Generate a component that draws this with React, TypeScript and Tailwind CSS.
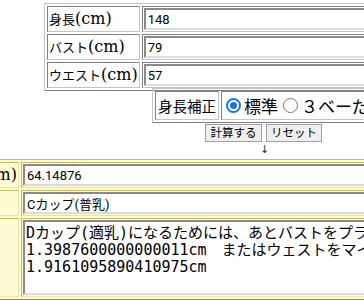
import React from "react";

const tblTop =
  "border-separate border-spacing-[2px] border border-solid border-t-[#c4c4c4] border-l-[#c4c4c4] border-r-[#808080] border-b-[#808080]";
const tdTop =
  "p-[1px] border border-solid border-t-[#808080] border-l-[#808080] border-r-[#c4c4c4] border-b-[#c4c4c4] align-middle";
const inputCls =
  "block h-[22px] px-[2px] border-2 border-solid border-t-[#8a8a8a] border-l-[#8a8a8a] border-r-[#dcdcdc] border-b-[#dcdcdc] bg-white text-[13px] text-black font-['Roboto','Noto_Sans_CJK_JP',sans-serif] outline-none";
const serif = "font-['DejaVu_Serif','Noto_Sans_CJK_JP',serif] text-[16px] leading-[20px] text-black whitespace-nowrap";
const cjk = "font-['Noto_Sans_CJK_JP',sans-serif] text-[13px]";

const tblBot =
  "border-separate border-spacing-[2px] bg-[#fffbd2] border border-solid border-t-[#bdb88a] border-l-[#bdb88a] border-r-[#8f8a60] border-b-[#8f8a60]";
const tdBot =
  "p-[1px] border border-solid border-t-[#c9b85c] border-l-[#c9b85c] border-r-[#ece2a8] border-b-[#ece2a8] align-middle bg-[#fffbd2]";

function Label({ jp }: { jp: string }) {
  return (
    <div className={serif}>
      <span className={cjk}>{jp}</span>(cm)
    </div>
  );
}

export default function App() {
  return (
    <div className="w-[364px] h-[300px] overflow-hidden bg-white">
      <div className="pt-[3px]">
        <table className={"ml-[44px] " + tblTop}>
          <tbody>
            <tr>
              <td className={tdTop + " w-[94px]"}>
                <Label jp="身長" />
              </td>
              <td className={tdTop}>
                <input className={inputCls + " w-[260px]"} defaultValue="148" />
              </td>
            </tr>
            <tr>
              <td className={tdTop}>
                <Label jp="バスト" />
              </td>
              <td className={tdTop}>
                <input className={inputCls + " w-[260px]"} defaultValue="79" />
              </td>
            </tr>
            <tr>
              <td className={tdTop}>
                <Label jp="ウエスト" />
              </td>
              <td className={tdTop}>
                <input className={inputCls + " w-[260px]"} defaultValue="57" />
              </td>
            </tr>
          </tbody>
        </table>

        <table className={"ml-[152px] -mt-[3px] " + tblTop}>
          <tbody>
            <tr>
              <td className={tdTop}>
                <div className="h-[25px] flex items-center px-[1px] font-['Noto_Sans_CJK_JP',sans-serif] text-[14.5px] text-black whitespace-nowrap">
                  身長補正
                </div>
              </td>
              <td className={tdTop}>
                <div className="h-[25px] w-[200px] flex items-center font-['Noto_Sans_CJK_JP',sans-serif] text-[17px] text-black whitespace-nowrap">
                  <span className="ml-[3px] w-[15px] h-[15px] rounded-full border-2 border-[#1a73e8] flex items-center justify-center">
                    <span className="w-[7px] h-[7px] rounded-full bg-[#1a73e8]" />
                  </span>
                  <span className="ml-[3px]">標準</span>
                  <span className="ml-[5px] w-[15px] h-[15px] rounded-full border border-[#767676]" />
                  <span className="ml-[3px]">３ベーだ</span>
                </div>
              </td>
            </tr>
          </tbody>
        </table>

        <div className="ml-[205px] mt-[1px] flex gap-[4px]">
          <button className="h-[18px] w-[57px] flex items-center justify-center border border-solid border-[#a0a0a0] bg-[#efefef] font-['Noto_Sans_CJK_JP',sans-serif] text-[11.5px] text-black">
            計算する
          </button>
          <button className="h-[18px] w-[56px] flex items-center justify-center border border-solid border-[#a0a0a0] bg-[#efefef] font-['Noto_Sans_CJK_JP',sans-serif] text-[11.5px] text-black">
            リセット
          </button>
        </div>
        <div className="ml-[260px] h-[17px] flex items-center font-['DejaVu_Sans',sans-serif] text-[11px] text-[#333]">
          ↓
        </div>

        <table className={"-ml-[108px] " + tblBot}>
          <tbody>
            <tr>
              <td className={tdBot}>
                <div className={serif + " w-[120px] text-right"}>
                  <span className={cjk}>アンダー</span>(cm)
                </div>
              </td>
              <td className={tdBot}>
                <input className={inputCls + " w-[400px]"} defaultValue="64.14876" />
              </td>
            </tr>
            <tr>
              <td className={tdBot}>
                <div className={serif + " w-[120px] text-left"}>
                  <span className={cjk}>カップ</span>
                </div>
              </td>
              <td className={tdBot}>
                <input className={inputCls + " w-[400px]"} defaultValue="Cカップ(普乳)" />
              </td>
            </tr>
            <tr>
              <td className={tdBot}>
                <div className={serif + " w-[120px] text-left"}>
                  <span className={cjk}>アドバイス</span>
                </div>
              </td>
              <td className={tdBot}>
                <div className="w-[400px] h-[75px] border-2 border-solid border-t-[#8a8a8a] border-l-[#8a8a8a] border-r-[#dcdcdc] border-b-[#dcdcdc] bg-white px-[1px] pt-[3px] font-['DejaVu_Sans_Mono','Noto_Sans_CJK_JP',monospace] text-[15px] leading-[17px] text-black whitespace-pre">
                  <div>Dカップ(適乳)になるためには、あとバストをプラス</div>
                  <div>1.3987600000000011cm　またはウェストをマイナス</div>
                  <div>1.9161095890410975cm</div>
                </div>
              </td>
            </tr>
          </tbody>
        </table>
      </div>
    </div>
  );
}
